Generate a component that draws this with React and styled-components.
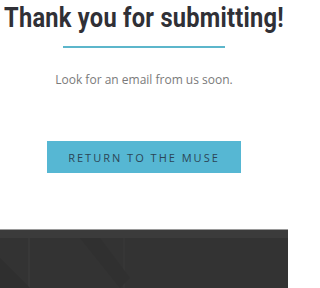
import React from 'react'
import styled, { createGlobalStyle } from 'styled-components'

const GlobalStyle = createGlobalStyle`
	html, body {
		margin: 0;
		padding: 0;
		background: #ffffff;
		overflow: hidden;
	}
	body {
		width: 288px;
		height: 288px;
	}
`

const Page = styled.div`
	display: flex;
	flex-direction: column;
	width: 288px;
	height: 288px;
	overflow: hidden;
`

const Main = styled.main`
	display: flex;
	flex-direction: column;
	align-items: center;
	height: 229px;
	padding-top: 3px;
	box-sizing: border-box;
`

// reference title is a condensed face, squeeze Roboto to fit
const Title = styled.h1`
	margin: 0;
	font-family: Roboto, "Liberation Sans", sans-serif;
	font-weight: 700;
	font-size: 27px;
	line-height: 30px;
	color: #303036;
	white-space: nowrap;
	letter-spacing: 0.3px;
	transform: scaleX(0.875);
`

const Rule = styled.div`
	width: 162px;
	height: 2px;
	margin-top: 13px;
	background: #5cb6cb;
`

const Note = styled.p`
	margin: 24px 0 0;
	font-family: "Open Sans", Lato, sans-serif;
	font-size: 12px;
	line-height: 16px;
	color: #7a7a7a;
`

const ReturnButton = styled.a`
	display: flex;
	align-items: center;
	justify-content: center;
	width: 194px;
	height: 32px;
	margin-top: 53px;
	background: #56b7d3;
	color: #2c4656;
	font-family: "Open Sans", "Liberation Sans", sans-serif;
	font-size: 11px;
	letter-spacing: 2px;
	text-transform: uppercase;
	text-decoration: none;
`

const Footer = styled.footer`
	flex: 1;
	display: flex;
	flex-direction: column;
	background: #333333;
	border-top: 1px solid #9a9a9a;
`

const FooterBand = styled.div`
	height: 8px;
	background: #3b3b3b;
`

const FooterArt = styled.svg`
	display: block;
	flex: 1;
	width: 100%;
`

export default function App() {
	return (
		<Page>
			<GlobalStyle />
			<Main>
				<Title>Thank you for submitting!</Title>
				<Rule />
				<Note>Look for an email from us soon.</Note>
				<ReturnButton href="#">Return to the Muse</ReturnButton>
			</Main>
			<Footer>
				<FooterBand />
				<FooterArt viewBox="0 0 288 50" preserveAspectRatio="none">
					<rect x="28" y="0" width="2" height="50" fill="#383838" />
					<rect x="123" y="0" width="2" height="50" fill="#363636" />
					<polygon points="80,0 100,0 130,40 120,50" fill="#303030" />
					<polygon points="0,20 30,50 0,50" fill="#2f2f2f" />
				</FooterArt>
			</Footer>
		</Page>
	)
}
